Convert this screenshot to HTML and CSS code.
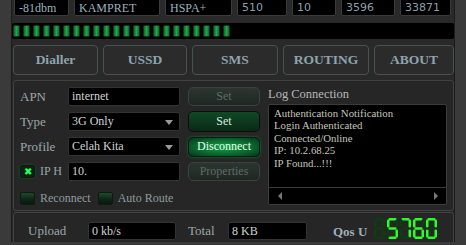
FILE: index.html
```html
<!DOCTYPE html>
<html lang="en">
<head>
  <title>Modem Dashboard</title>
  <link rel="stylesheet" href="styles.css">
</head>
<body>
  <div class="app">
    <div class="info">
      <div class="info-box w1">-81dbm</div>
      <div class="info-box w2">KAMPRET</div>
      <div class="info-box w3">HSPA+</div>
      <div class="info-box num w4">510</div>
      <div class="info-box num w5">10</div>
      <div class="info-box num w6">3596</div>
      <div class="info-box num w7">33871</div>
    </div>

    <div class="signal" id="signal"></div>

    <div class="tabs">
      <button class="tab t1">Dialler</button>
      <button class="tab t2">USSD</button>
      <button class="tab t3">SMS</button>
      <button class="tab t4">ROUTING</button>
      <button class="tab t5">ABOUT</button>
    </div>

    <div class="panel main">
      <div class="left">
        <div class="row">
          <span class="label">APN</span>
          <div class="field">internet</div>
          <button class="btn off">Set</button>
        </div>
        <div class="row">
          <span class="label">Type</span>
          <div class="field select">3G Only<i class="arrow"></i></div>
          <button class="btn on">Set</button>
        </div>
        <div class="row">
          <span class="label">Profile</span>
          <div class="field select">Celah Kita<i class="arrow"></i></div>
          <button class="btn glow">Disconnect</button>
        </div>
        <div class="row">
          <span class="label check-label"><span class="check checked">&#x2716;</span>IP H</span>
          <div class="field">10.</div>
          <button class="btn off">Properties</button>
        </div>
        <div class="checks">
          <span class="check"></span><span class="check-text">Reconnect</span>
          <span class="check"></span><span class="check-text">Auto Route</span>
        </div>
      </div>
      <div class="log">
        <div class="log-title">Log Connection</div>
        <div class="log-box">
          <div class="log-lines">
            <div class="log-line">Authentication Notification</div>
            <div class="log-line">Login Authenticated</div>
            <div class="log-line">Connected/Online</div>
            <div class="log-line">IP: 10.2.68.25</div>
            <div class="log-line">IP Found...!!!</div>
          </div>
          <div class="scroll">
            <i class="sa left-a"></i>
            <i class="sa right-a"></i>
          </div>
        </div>
      </div>
    </div>

    <div class="panel stats">
      <span class="slabel up">Upload</span>
      <div class="field sfield f1">0 kb/s</div>
      <span class="slabel tot">Total</span>
      <div class="field sfield f2">8 KB</div>
      <span class="qos">Qos U</span>
      <svg class="seg" id="seg" width="64" height="21" viewBox="0 0 64 21"></svg>
    </div>
  </div>

<script>
  var signal = document.getElementById('signal');
  var html = '';
  for (var i = 0; i < 22; i++) {
    html += '<span class="bar"></span>';
  }
  signal.innerHTML = html;

  // seven segment readout
  var segs = {
    a: [1.5, 0, 8, 2.5], b: [8.5, 1.5, 2.5, 8], c: [8.5, 11.5, 2.5, 8],
    d: [1.5, 18.5, 8, 2.5], e: [0, 11.5, 2.5, 8], f: [0, 1.5, 2.5, 8],
    g: [1.5, 9.25, 8, 2.5]
  };
  var digits = ['', 'afgcd', 'abc', 'afgedc', 'abcdef'];
  var svg = '';
  digits.forEach(function (d, n) {
    var x0 = n * 13 + 1;
    Object.keys(segs).forEach(function (k) {
      var s = segs[k];
      var lit = d.indexOf(k) > -1;
      svg += '<rect x="' + (x0 + s[0]) + '" y="' + s[1] + '" width="' + s[2] + '" height="' + s[3] + '" rx="1" fill="' + (lit ? '#27ff27' : '#0d3d10') + '"/>';
    });
  });
  document.getElementById('seg').innerHTML = svg;
</script>
</body>
</html>
```

FILE: styles.css
```css
body {
  margin: 0;
  background: #3a3a3a;
  font-family: "Liberation Serif", "DejaVu Serif", serif;
  overflow: hidden;
}

.app {
  margin-left: 11px;
  width: 444px;
  height: 245px;
  background: #292929;
  border-left: 1px solid #1c1c1c;
  border-right: 1px solid #1c1c1c;
  box-sizing: border-box;
}

.info {
  display: flex;
  gap: 5px;
  margin-top: -3px;
  padding-left: 2px;
}

.info-box {
  height: 19px;
  background: #000;
  border: 1px solid #3a3a3a;
  border-radius: 2px;
  box-sizing: border-box;
  color: #9cb2bf;
  font-size: 12px;
  line-height: 20px;
  padding-left: 4px;
}

.info-box.num {
  font-family: "DejaVu Sans", "Liberation Sans", sans-serif;
  font-size: 11px;
  color: #8c9faa;
}

.w1 { width: 55px; }
.w2 { width: 86px; }
.w3 { width: 67px; }
.w4 { width: 50px; }
.w5 { width: 44px; }
.w6 { width: 54px; }
.w7 { width: 51px; }

.signal {
  display: flex;
  align-items: center;
  gap: 3px;
  margin-top: 7px;
  width: 442px;
  height: 16px;
  background: #000;
  border-radius: 2px;
  padding-left: 1px;
  box-sizing: border-box;
}

.bar {
  width: 7px;
  height: 12px;
  box-sizing: border-box;
  border: 1px solid #0b3315;
  border-radius: 1px;
  background: linear-gradient(to right, #0e6a28, #22a648 50%, #0e6a28);
}

.tabs {
  display: flex;
  gap: 5px;
  margin-top: 6px;
  padding-left: 1px;
}

.tab {
  height: 30px;
  background: #2b2b2b;
  border: 1px solid #47524e;
  border-radius: 4px;
  color: #8ea4ae;
  font-family: "Liberation Serif", "DejaVu Serif", serif;
  font-weight: bold;
  font-size: 13.5px;
  padding: 0;
}

.t1 { width: 85px; }
.t2 { width: 84px; }
.t3 { width: 86px; }
.t4 { width: 86px; }
.t5 { width: 80px; }

.panel {
  margin-left: 1px;
  width: 441px;
  background: #262626;
  border: 1px solid #414141;
  border-radius: 3px;
  box-sizing: border-box;
}

.main {
  display: flex;
  gap: 8px;
  margin-top: 5px;
  padding: 6px 6px 5px 6px;
}

.left {
  width: 240px;
}

.row {
  display: flex;
  align-items: center;
  height: 19px;
  margin-bottom: 6px;
}

.label {
  width: 48px;
  color: #9aa6aa;
  font-size: 13px;
}

.check-label {
  display: flex;
  align-items: center;
  font-size: 12px;
}

.field {
  position: relative;
  width: 112px;
  height: 19px;
  background: #000;
  border: 1px solid #333;
  border-radius: 2px;
  box-sizing: border-box;
  color: #d2d2d2;
  font-size: 12px;
  line-height: 16px;
  padding-left: 3px;
}

.arrow {
  position: absolute;
  right: 6px;
  top: 7px;
  border-left: 4.5px solid transparent;
  border-right: 4.5px solid transparent;
  border-top: 5px solid #9a9a9a;
}

.btn {
  width: 72px;
  height: 19px;
  margin-left: 8px;
  border-radius: 5px;
  font-family: "Liberation Serif", "DejaVu Serif", serif;
  font-size: 12px;
  padding: 0;
  box-sizing: border-box;
}

.btn.off {
  background: linear-gradient(#2c3631, #1f2723);
  border: 1px solid #39423e;
  color: #5e6a64;
}

.btn.on {
  background: linear-gradient(#0f4a26, #0a2a16);
  border: 1px solid #0a0f0c;
  color: #d8e8de;
  height: 21px;
}

.btn.glow {
  background: radial-gradient(ellipse at center, #13a14b 0%, #0b6a30 55%, #06351a 100%);
  border: 1px solid #0a1a10;
  color: #e6ffe9;
  height: 20px;
  box-shadow: 0 0 3px #0d7a36;
}

.check {
  display: inline-block;
  width: 15px;
  height: 13px;
  box-sizing: border-box;
  border: 1px solid #0c1a10;
  border-radius: 2px;
  background: linear-gradient(#1f4a2c, #0d2416 60%, #0a1a10);
  margin-right: 5px;
  font-size: 10px;
  line-height: 11px;
  text-align: center;
  color: #2dff5a;
}

.check.checked {
  background: #0a2414;
  box-shadow: 0 0 2px #0f6a30;
}

.checks {
  display: flex;
  align-items: center;
  margin-top: 11px;
  height: 13px;
}

.check-text {
  color: #8f9c9e;
  font-size: 12px;
  margin-right: 7px;
}

.log {
  width: 179px;
}

.log-title {
  color: #b6b6b6;
  font-size: 12.5px;
  height: 17px;
  line-height: 14px;
}

.log-box {
  height: 101px;
  background: #000;
  border: 1px solid #3c3c3c;
  border-radius: 2px;
  box-sizing: border-box;
  display: flex;
  flex-direction: column;
}

.log-lines {
  flex: 1;
  padding: 2px 5px;
  color: #c6c6bc;
  font-size: 10.8px;
}

.log-line {
  height: 12.4px;
  line-height: 12.4px;
}

.scroll {
  height: 16px;
  border-top: 1px solid #3a3a3a;
  display: flex;
  align-items: center;
  justify-content: space-between;
  padding: 0 8px 0 9px;
}

.sa {
  border-top: 4px solid transparent;
  border-bottom: 4px solid transparent;
}

.left-a { border-right: 4px solid #777; }
.right-a { border-left: 4px solid #777; }

.stats {
  display: flex;
  align-items: flex-start;
  margin-top: 1px;
  height: 40px;
  padding: 9px 0 0 14px;
}

.slabel {
  color: #9aa6aa;
  font-size: 13px;
  line-height: 18px;
}

.up { width: 60px; }

.tot {
  margin-left: 12px;
  width: 40px;
}

.sfield {
  height: 18px;
}

.f1 { width: 88px; }
.f2 { width: 79px; }

.qos {
  margin-left: 26px;
  color: #9eb0b8;
  font-weight: bold;
  font-size: 13px;
  line-height: 20px;
  width: 40px;
}

.seg {
  margin-top: -4px;
}
```
